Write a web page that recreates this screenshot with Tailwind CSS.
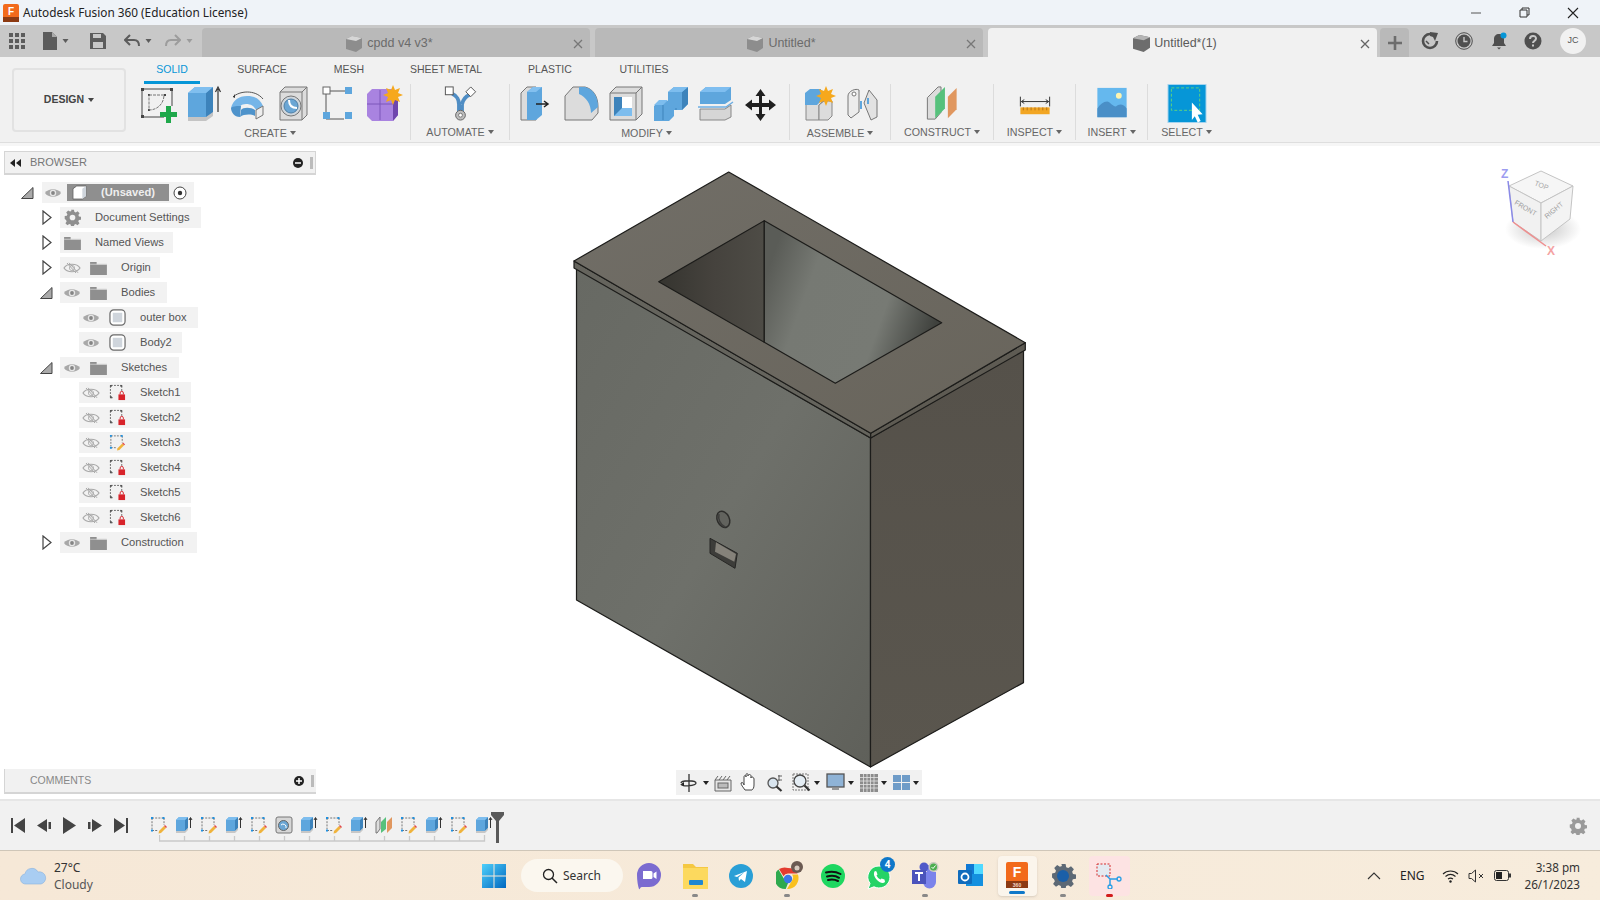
<!DOCTYPE html>
<html lang="en">
<head>
<meta charset="UTF-8">
<title>Autodesk Fusion 360 (Education License)</title>
<script src="https://cdn.jsdelivr.net/npm/@tailwindcss/browser@4"></script>
</head>
<body class="bg-white overflow-hidden">
<!-- shared icons -->
<svg class="absolute w-0 h-0">
  <defs>
    <linearGradient id="gFront" x1="0" y1="0" x2="1" y2="1"><stop offset="0" stop-color="#676963"/><stop offset=".5" stop-color="#6e706a"/><stop offset="1" stop-color="#5f605a"/></linearGradient>
    <linearGradient id="gRight" x1="0" y1="0" x2="0" y2="1"><stop offset="0" stop-color="#55514a"/><stop offset="1" stop-color="#5a564e"/></linearGradient>
    <linearGradient id="gTop" x1="0" y1="0" x2="1" y2="1"><stop offset="0" stop-color="#716e67"/><stop offset="1" stop-color="#68645b"/></linearGradient>
    <linearGradient id="gWallL" x1="0" y1="0" x2="1" y2="0"><stop offset="0" stop-color="#35342f"/><stop offset=".5" stop-color="#45423d"/><stop offset="1" stop-color="#4e4c46"/></linearGradient>
    <linearGradient id="gWallR" x1="764" y1="280" x2="930" y2="340" gradientUnits="userSpaceOnUse"><stop offset="0" stop-color="#5a5c57"/><stop offset=".25" stop-color="#767973"/><stop offset=".7" stop-color="#777a74"/><stop offset="1" stop-color="#3f413d"/></linearGradient>
    <linearGradient id="gWin" x1="0" y1="0" x2="1" y2="1"><stop offset="0" stop-color="#4fd0fb"/><stop offset="1" stop-color="#0067c0"/></linearGradient>
    <radialGradient id="gShadow"><stop offset="0" stop-color="#999" stop-opacity=".55"/><stop offset="1" stop-color="#999" stop-opacity="0"/></radialGradient>
  </defs>
  <symbol id="caret" viewBox="0 0 6 4"><path d="M0 0h6L3 4z" fill="currentColor"/></symbol>
  <symbol id="eye" viewBox="0 0 18 12"><path d="M1 6C4 1 14 1 17 6C14 11 4 11 1 6Z" fill="#a8a8a8"/><circle cx="9" cy="6" r="3.200" fill="#e6e6e6"/><circle cx="9" cy="6" r="1.900" fill="#858585"/></symbol>
  <symbol id="eyeoff" viewBox="0 0 18 12"><path d="M1 6C4 1 14 1 17 6C14 11 4 11 1 6Z" fill="none" stroke="#a8a8a8" stroke-width="1.200"/><circle cx="9" cy="6" r="2.600" fill="none" stroke="#b5b5b5"/><path d="M4 1l9 10M6 .8l9 10" stroke="#a8a8a8"/></symbol>
  <symbol id="folder" viewBox="0 0 18 15"><path d="M0 1h7v3h11v11H0z" fill="#8f8f8f"/><path d="M0 3h18v1H0z" fill="#c9c9c9"/></symbol>
  <symbol id="body" viewBox="0 0 18 18"><rect x="1" y="1" width="16" height="16" rx="4" fill="#fff" stroke="#6b6b6b" stroke-width="1.300"/><rect x="4" y="4" width="10" height="10" fill="#cfd5dc"/></symbol>
  <symbol id="sklock" viewBox="0 0 18 18"><path d="M2 1.500h11M1.500 2v12M2 14.500h3M13.500 2v6" stroke="#666" fill="none" stroke-dasharray="2 1.300"/><path d="M1 1h2v2H1zM12 1h2v2h-2zM1 13h2v2H1z" fill="#555"/><rect x="10" y="11" width="7" height="6" fill="#d8232a"/><path d="M11.800 11V9.500a1.700 1.700 0 0 1 3.400 0V11" stroke="#d8232a" fill="none"/></symbol>
  <symbol id="skedit" viewBox="0 0 18 18"><path d="M2 2h11M2 2v11M2 14.500h6M14 2v7" stroke="#777" fill="none" stroke-dasharray="2 1.200"/><path d="M1 1h2v2H1zM12.500 1h2v2h-2zM1 13.500h2v2H1z" fill="#1e90e0"/><path d="M9 15l5-5 2 2-5 5-2.500.5z" fill="#f0b33c"/><path d="M14 10l1-1 2 2-1 1z" fill="#e0454a"/></symbol>
  <symbol id="extr" viewBox="0 0 18 18"><path d="M1 4l3-3h9v11l-3 3H1z" fill="#5ea6dd"/><path d="M10 4l3-3v11l-3 3z" fill="#3d83bb"/><path d="M1 4l3-3h9l-3 3z" fill="#7dbdee"/><path d="M1 15h9l3-3v2l-3 3H1z" fill="#c7c7c7"/><path d="M15.500 12V2M14 4l1.500-2.500L17 4" stroke="#333" fill="none"/></symbol>
  <symbol id="hole" viewBox="0 0 18 18"><rect x="1" y="1" width="16" height="16" rx="2" fill="#d6d6d6" stroke="#777"/><circle cx="8.500" cy="9.500" r="5" fill="#6ba6d4" stroke="#666"/><path d="M6 9a3 3 0 0 1 5 3" fill="none" stroke="#fff"/></symbol>
  <symbol id="constr" viewBox="0 0 18 18"><path d="M1 6l4-5v12l-3 4H1z" fill="#ddd" stroke="#777"/><path d="M6 6l5-5v12l-5 4z" fill="#56c17c"/><path d="M12 6l5-5v11l-5 5z" fill="#e0975f"/></symbol>
  <symbol id="gear" viewBox="0 0 24 24"><path d="M10 1h4l.6 3 2 .8 2.600-1.700 2.800 2.800-1.700 2.600.8 2 2.900.5v4l-3 .6-.8 2 1.700 2.600-2.800 2.800-2.600-1.700-2 .8-.5 2.900h-4l-.6-3-2-.8-2.600 1.700-2.800-2.800 1.700-2.600-.8-2L1 14v-4l3-.6.8-2-1.700-2.600 2.800-2.800 2.600 1.700 2-.8zM12 8a4 4 0 1 0 0 8 4 4 0 0 0 0-8z" fill="currentColor" fill-rule="evenodd"/></symbol>
</svg>

<div class="flex flex-col w-[1600px] h-[900px] font-['Liberation_Sans',Arial,sans-serif] text-[#555]">

  <!-- title bar -->
  <div class="flex items-center h-[25px] shrink-0 bg-[#eff3f8] text-[#222]">
    <svg class="w-[16px] h-[18px] ml-[3px]" viewBox="0 0 16 18"><rect width="16" height="18" rx="2" fill="#f26a1b"/><rect y="13" width="16" height="5" fill="#8c3a12"/><text x="8" y="11" text-anchor="middle" font-size="10" font-weight="700" fill="#fff" font-family="Liberation Sans">F</text></svg>
    <span class="ml-[4px] text-[11.8px] font-['Noto_Sans',sans-serif]">Autodesk Fusion 360 (Education License)</span>
    <div class="ml-auto flex items-center">
      <svg class="w-[48px] h-[14px]" viewBox="0 0 48 14"><path d="M19 7h10" stroke="#555"/></svg>
      <svg class="w-[48px] h-[14px]" viewBox="0 0 48 14"><path d="M20 4h7v7h-7zM22 4V2h7v7h-2" stroke="#333" fill="none"/></svg>
      <svg class="w-[50px] h-[14px] mr-[2px]" viewBox="0 0 50 14"><path d="M20 2l10 10M30 2L20 12" stroke="#222" stroke-width="1.100"/></svg>
    </div>
  </div>

  <!-- tab bar -->
  <div class="flex items-end h-[32px] shrink-0 bg-[#c8c8c8]">
    <div class="flex items-center w-[202px] h-full text-[#5c5c5c]">
      <svg class="ml-[9px] w-[16px] h-[16px]" viewBox="0 0 16 16" fill="currentColor"><path d="M0 0h4v4H0zM6 0h4v4H6zM12 0h4v4h-4zM0 6h4v4H0zM6 6h4v4H6zM12 6h4v4h-4zM0 12h4v4H0zM6 12h4v4H6zM12 12h4v4h-4z"/></svg>
      <svg class="ml-[18px] w-[14px] h-[18px]" viewBox="0 0 14 18" fill="currentColor"><path d="M0 0h9l5 5v13H0z"/><path d="M9 0l5 5H9z" fill="#aaa"/></svg>
      <svg class="ml-[5px] w-[7px] h-[4px]"><use href="#caret"/></svg>
      <svg class="ml-[21px] w-[16px] h-[16px]" viewBox="0 0 16 16"><path d="M0 0h13l3 3v13H0z" fill="currentColor"/><path d="M3 1h8v4H3zM3 9h10v6H3z" fill="#c8c8c8"/></svg>
      <svg class="ml-[18px] w-[16px] h-[14px]" viewBox="0 0 16 14"><path d="M6 1L1 6l5 5M1 6h9c3 0 5 2 5 6" fill="none" stroke="currentColor" stroke-width="2"/></svg>
      <svg class="ml-[5px] w-[7px] h-[4px]"><use href="#caret"/></svg>
      <svg class="ml-[13px] w-[16px] h-[14px] text-[#9c9c9c]" viewBox="0 0 16 14"><path d="M10 1l5 5-5 5M15 6H6c-3 0-5 2-5 6" fill="none" stroke="currentColor" stroke-width="2"/></svg>
      <svg class="ml-[5px] w-[7px] h-[4px] text-[#9c9c9c]"><use href="#caret"/></svg>
    </div>
    <div class="flex items-center pt-[2px] w-[388px] h-[29px] bg-[#b9b9b9] rounded-t-[4px] text-[12.5px] text-[#6b6b6b]">
      <span class="flex-1"></span>
      <svg class="w-[16px] h-[16px] mr-[5px]" viewBox="0 0 16 16"><path d="M0 3l6-3 10 2v10l-6 4-10-3z" fill="#8d8d8d"/><path d="M0 3l10 2 6-3-10-2z" fill="#d6d6d6"/></svg>
      <span class="mr-[6px]">cpdd v4 v3*</span>
      <span class="flex-1 flex justify-end pr-[7px]"><svg class="w-[10px] h-[10px]" viewBox="0 0 10 10"><path d="M1 1l8 8M9 1l-8 8" stroke="#777" stroke-width="1.300"/></svg></span>
    </div>
    <div class="flex items-center pt-[2px] ml-[5px] w-[388px] h-[29px] bg-[#b9b9b9] rounded-t-[4px] text-[12.5px] text-[#6b6b6b]">
      <span class="flex-1"></span>
      <svg class="w-[16px] h-[16px] mr-[5px]" viewBox="0 0 16 16"><path d="M0 3l6-3 10 2v10l-6 4-10-3z" fill="#8d8d8d"/><path d="M0 3l10 2 6-3-10-2z" fill="#d6d6d6"/></svg>
      <span class="mr-[8px]">Untitled*</span>
      <span class="flex-1 flex justify-end pr-[7px]"><svg class="w-[10px] h-[10px]" viewBox="0 0 10 10"><path d="M1 1l8 8M9 1l-8 8" stroke="#777" stroke-width="1.300"/></svg></span>
    </div>
    <div class="flex items-center pt-[2px] ml-[5px] w-[389px] h-[29px] bg-[#f1f1f1] rounded-t-[4px] text-[12.5px] text-[#5a5a5a]">
      <span class="flex-1"></span>
      <svg class="w-[17px] h-[17px] mr-[4px]" viewBox="0 0 16 16"><path d="M0 3l6-3 10 2v10l-6 4-10-3z" fill="#6d6d6d"/><path d="M0 3l10 2 6-3-10-2z" fill="#b5b5b5"/></svg>
      <span class="mr-[8px]">Untitled*(1)</span>
      <span class="flex-1 flex justify-end pr-[7px]"><svg class="w-[10px] h-[10px]" viewBox="0 0 10 10"><path d="M1 1l8 8M9 1l-8 8" stroke="#666" stroke-width="1.300"/></svg></span>
    </div>
    <div class="flex items-center justify-center ml-[3px] w-[29px] h-[29px] bg-[#b9b9b9] rounded-t-[4px]">
      <svg class="w-[14px] h-[14px]" viewBox="0 0 14 14"><path d="M7 0v14M0 7h14" stroke="#6d6d6d" stroke-width="2.600"/></svg>
    </div>
    <div class="flex items-center h-full text-[#4f4f4f]">
      <svg class="ml-[12px] w-[18px] h-[18px]" viewBox="0 0 18 18"><path d="M9 2a7 7 0 1 0 7 7" fill="none" stroke="currentColor" stroke-width="2.600"/><path d="M9 0l8 1-3 8-2-4-3-1z" fill="currentColor"/><path d="M5 9l3 3" stroke="currentColor" stroke-width="1.500"/></svg>
      <svg class="ml-[16px] w-[18px] h-[18px]" viewBox="0 0 18 18"><circle cx="9" cy="9" r="8.300" fill="none" stroke="currentColor"/><circle cx="9" cy="9" r="6.500" fill="currentColor"/><path d="M9 5v4.500h3.500" fill="none" stroke="#c8c8c8" stroke-width="1.400"/></svg>
      <svg class="ml-[17px] w-[18px] h-[18px]" viewBox="0 0 18 18"><path d="M9 2c3 0 5 2 5 5v4l2 3H2l2-3V7c0-3 2-5 5-5z" fill="currentColor"/><path d="M7 15.500h4l-2 2z" fill="currentColor"/><circle cx="13.500" cy="3.500" r="3" fill="#0696d7"/></svg>
      <svg class="ml-[16px] w-[18px] h-[18px]" viewBox="0 0 18 18"><circle cx="9" cy="9" r="8.500" fill="currentColor"/><path d="M6 7c0-4 6-4 6-.5 0 2.500-3 2.500-3 4.500" fill="none" stroke="#c8c8c8" stroke-width="2"/><path d="M8 12.500h2v2H8z" fill="#c8c8c8"/></svg>
      <span class="flex items-center justify-center ml-[18px] w-[26px] h-[26px] rounded-full bg-[#f1f1f1] text-[9px] text-[#555]">JC</span>
    </div>
  </div>

  <!-- toolbar -->
  <div class="flex h-[86px] shrink-0 bg-[#f1f1f1] border-b-[1px] border-[#dedede] shadow-[0_3px_0_#f6f6f6] z-10 relative">
    <button class="flex items-center justify-center ml-[12px] mt-[11px] w-[114px] h-[64px] border-2 border-[#e2e2e2] rounded-[4px] text-[10.5px] font-bold text-[#444]">DESIGN<svg class="ml-[4px] w-[6px] h-[4px]"><use href="#caret"/></svg></button>
    <div class="flex flex-col ml-[10px]">
      <div class="flex h-[27px] text-[10.5px] text-[#555] text-center">
        <span class="ml-[8px] w-[56px] pt-[5px] border-b-[3px] border-[#0696d7] text-[#0696d7]">SOLID</span>
        <span class="w-[124px] pt-[5px]">SURFACE</span>
        <span class="w-[50px] pt-[5px]">MESH</span>
        <span class="w-[144px] pt-[5px]">SHEET METAL</span>
        <span class="w-[64px] pt-[5px]">PLASTIC</span>
        <span class="w-[124px] pt-[5px]">UTILITIES</span>
      </div>
      <div class="flex text-[10.7px] text-[#666]">
        <!-- create -->
        <div class="flex flex-col items-center w-[274px] h-[56px]">
          <div class="flex h-[40px] -ml-[6px]">
            <svg class="w-[45px] h-[40px]" viewBox="0 0 45 40"><path d="M7 5h30M7 5v28M7 33h22M37 5v17" stroke="#444" fill="none" stroke-width="1"/><path d="M6 4h3v3H6zM35 4h3v3h-3zM6 31h3v3H6zM13 10h2v2h-2zM29 10h2v2h-2zM13 25h2v2h-2z" fill="#444"/><path d="M14 11h15c0 8-6 15-15 15z" fill="none" stroke="#777" stroke-dasharray="3 1"/><path d="M31 22h5v6h6v5h-6v6h-5v-6h-6v-5h6z" fill="#1fa84b"/></svg>
            <svg class="w-[45px] h-[40px]" viewBox="0 0 45 40"><path d="M8 9l7-6h18v26l-7 6H8z" fill="#5ea6dd"/><path d="M26 9l7-6v26l-7 6z" fill="#3d83bb"/><path d="M8 9l7-6h18l-7 6z" fill="#80bfef"/><path d="M8 33h18l7-5v4l-7 5H8z" fill="#c4c4c4"/><path d="M38 28V5M35.500 8L38 3l2.500 5" stroke="#333" fill="none" stroke-width="1.200"/></svg>
            <svg class="w-[45px] h-[40px]" viewBox="0 0 45 40"><path d="M6 24c2-8 8-12 16-12s13 3 16 10l-7 4c-2-4-5-6-10-6s-7 3-8 6z" fill="#75b5e8"/><path d="M6 24c0 4 3 9 9 9 0-4 1-9 1-11-3 0-8 0-10 2z" fill="#4e93cb"/><path d="M15 33l1-7c2-3 10-3 14 0v6c-4-2-11-2-15 1z" fill="#4e93cb"/><path d="M31 26l7-4v9l-7 4z" fill="#eee" stroke="#777"/><path d="M8 13c6-6 22-8 30 2" fill="none" stroke="#555"/><path d="M8 13l2-3v4z" fill="#333"/></svg>
            <svg class="w-[45px] h-[40px]" viewBox="0 0 45 40"><path d="M10 8l5-5h22v28l-5 5H10z" fill="#dcdcdc" stroke="#777"/><path d="M10 8h22v28M32 8l5-5" fill="none" stroke="#777"/><circle cx="21" cy="22" r="10" fill="#cfd6dc" stroke="#777"/><circle cx="21" cy="22" r="7" fill="#6ba6d4" stroke="#4e7fa6"/><path d="M19 16c0 5 3 8 8 8" fill="none" stroke="#fff" stroke-width="2"/></svg>
            <svg class="w-[45px] h-[40px]" viewBox="0 0 45 40"><path d="M11 7h24M11 10v19" stroke="#555"/><path d="M11 35h18" stroke="#555"/><rect x="8" y="3" width="7" height="7" fill="#fff" stroke="#666"/><rect x="30" y="3" width="7" height="7" fill="#5ea6dd"/><rect x="8" y="28" width="7" height="7" fill="#5ea6dd"/><rect x="30" y="28" width="7" height="7" fill="#5ea6dd"/></svg>
            <svg class="w-[45px] h-[40px]" viewBox="0 0 45 40"><path d="M7 10l5-5h20l6 6v20l-5 6H12l-5-5z" fill="#a983e0"/><path d="M7 20h30M20 6v30" stroke="#7c57ba" stroke-width="1"/><path d="M33 12l5 5v14l-5 6z" fill="#6f46ad"/><path d="M33 1l2 5 5-2-2 5 5 2-5 2 2 5-5-2-2 5-2-5-5 2 2-5-5-2 5-2-2-5 5 2z" fill="#f6a81c"/></svg>
          </div>
          <span class="flex items-center h-[16px] mt-[1px] -ml-[6px]">CREATE<svg class="ml-[3px] w-[6px] h-[4px]"><use href="#caret"/></svg></span>
        </div>
        <!-- automate -->
        <div class="flex flex-col items-center w-[99px] h-[56px] border-l border-[#dcdcdc]">
          <svg class="w-[40px] h-[40px]" viewBox="0 0 40 40"><path d="M12 10c5 2 7 7 7 11M30 11c-5 2-7 5-8 10M19 21v9h3v-9" fill="none" stroke="#4f8dc4" stroke-width="4"/><rect x="5" y="3" width="8" height="8" fill="#fff" stroke="#555"/><path d="M31 3l5 5-5 5-5-5z" fill="#fff" stroke="#555"/><circle cx="20.500" cy="32" r="5" fill="#bdbdbd" stroke="#666"/><circle cx="20.500" cy="32" r="2" fill="#fff" stroke="#777"/></svg>
          <span class="flex items-center h-[16px] mt-[1px]">AUTOMATE<svg class="ml-[3px] w-[6px] h-[4px]"><use href="#caret"/></svg></span>
        </div>
        <!-- modify -->
        <div class="flex flex-col items-center w-[280px] h-[56px] border-l border-[#dcdcdc]">
          <div class="flex h-[40px] -ml-[4px]">
            <svg class="w-[45px] h-[40px]" viewBox="0 0 45 40"><path d="M8 36V9l6-6h9v33z" fill="#dcdcdc" stroke="#777"/><path d="M14 36V8l6-5h9v28l-6 5z" fill="#5ea6dd"/><path d="M14 8l6-5h9l-6 5z" fill="#83c0ef"/><path d="M23 20h11M31 17l4 3-4 3" stroke="#222" fill="none" stroke-width="1.500"/></svg>
            <svg class="w-[45px] h-[40px]" viewBox="0 0 45 40"><path d="M7 36V12l8-9h12c8 2 13 9 13 20v6l-6 7z" fill="#dcdcdc" stroke="#777"/><path d="M21 3h6c8 2 13 9 13 20l-7 6c0-9-5-16-12-19z" fill="#5ea6dd"/></svg>
            <svg class="w-[45px] h-[40px]" viewBox="0 0 45 40"><path d="M7 9l6-6h26v27l-6 6H7z" fill="#dcdcdc" stroke="#777"/><path d="M7 9h26v27M33 9l6-6" fill="none" stroke="#777"/><rect x="11" y="13" width="18" height="19" fill="#fff"/><path d="M11 13h8v11h10v8H11z" fill="#3d83bb"/><path d="M19 24h10v8H11z" fill="#7dbdee"/></svg>
            <svg class="w-[45px] h-[40px]" viewBox="0 0 45 40"><path d="M6 22l5-5h9V8l6-5h14v17l-6 6h-8v6l-5 5H6z" fill="#5ea6dd"/><path d="M34 8l6-5v17l-6 6z" fill="#3d83bb"/><path d="M20 8l6-5h14l-6 5zM6 21l5-5h9l-5 5z" fill="#7dbdee"/><path d="M15 21v15M28 26v-2" stroke="#3d83bb"/></svg>
            <svg class="w-[45px] h-[40px]" viewBox="0 0 45 40"><path d="M7 8l6-5h25v13l-6 4H7z" fill="#5ea6dd"/><path d="M7 8h25l6-5H13z" fill="#7fbef0"/><path d="M5 23h28l7-5" stroke="#6eaee3" fill="none" stroke-width="1.500"/><path d="M7 25h25l6-4v12l-6 3H7z" fill="#d6d6d6" stroke="#888"/></svg>
            <svg class="w-[45px] h-[40px]" viewBox="0 0 45 40"><path d="M22.500 5l5 7h-3.500v7h7v-3.500l7 5.500-7 5.500v-3.500h-7v7h3.500l-5 7-5-7h3.500v-7h-7v3.500l-7-5.500 7-5.500v3.500h7v-7h-3.500z" fill="#1f1f1f"/></svg>
          </div>
          <span class="flex items-center h-[16px] mt-[1px] -ml-[6px]">MODIFY<svg class="ml-[3px] w-[6px] h-[4px]"><use href="#caret"/></svg></span>
        </div>
        <!-- assemble -->
        <div class="flex flex-col items-center w-[101px] h-[56px] border-l border-[#dcdcdc]">
          <div class="flex h-[40px]">
            <svg class="w-[46px] h-[40px]" viewBox="0 0 46 40"><path d="M12 21l4-4h13l-4 4v15H12z" fill="#dcdcdc" stroke="#888"/><path d="M25 21l5-4h8v15l-4 4h-9z" fill="#dcdcdc" stroke="#888"/><path d="M11 9l5-4h11v12l-4 4H11z" fill="#5ea6dd"/><path d="M32 2l2 5 5-2-2 5 5 2-5 2 2 5-5-2-2 5-2-5-5 2 2-5-5-2 5-2-2-5 5 2z" fill="#f6a81c"/></svg>
            <svg class="w-[46px] h-[40px]" viewBox="0 0 46 40"><path d="M8 31V12c0-5 8-8 11-6v22l-8 6z" fill="#ececec" stroke="#777"/><circle cx="14" cy="10" r="2" fill="#fff" stroke="#777"/><path d="M24 19l5-13 8 10v17l-6 3z" fill="#e2e2e2" stroke="#777"/><path d="M21 17v8M28 14v6" stroke="#5ea6dd" stroke-width="2"/></svg>
          </div>
          <span class="flex items-center h-[16px] mt-[1px]">ASSEMBLE<svg class="ml-[3px] w-[6px] h-[4px]"><use href="#caret"/></svg></span>
        </div>
        <!-- construct -->
        <div class="flex flex-col items-center w-[103px] h-[56px] border-l border-[#dcdcdc]">
          <svg class="w-[40px] h-[40px]" viewBox="0 0 40 40"><path d="M5 36V14l11-11h3v26l-6 7z" fill="#dcdcdc" stroke="#777"/><path d="M13 35V13l10-10v22z" fill="#56c17c"/><path d="M26 35V13l9-9v22z" fill="#e0975f"/></svg>
          <span class="flex items-center h-[16px] mt-[1px]">CONSTRUCT<svg class="ml-[3px] w-[6px] h-[4px]"><use href="#caret"/></svg></span>
        </div>
        <!-- inspect -->
        <div class="flex flex-col items-center w-[82px] h-[56px] border-l border-[#dcdcdc]">
          <svg class="w-[40px] h-[40px]" viewBox="0 0 40 40"><path d="M5 13v10M35 13v10M6 18h28M9 16l-3 2 3 2M31 16l3 2-3 2" stroke="#333" fill="none"/><rect x="5" y="24" width="30" height="7" fill="#f2a623"/><path d="M8 24v3M12 24v3M16 24v3M20 24v3M24 24v3M28 24v3M32 24v3" stroke="#b6741a"/></svg>
          <span class="flex items-center h-[16px] mt-[1px]">INSPECT<svg class="ml-[3px] w-[6px] h-[4px]"><use href="#caret"/></svg></span>
        </div>
        <!-- insert -->
        <div class="flex flex-col items-center w-[72px] h-[56px] border-l border-[#dcdcdc]">
          <svg class="w-[40px] h-[40px]" viewBox="0 0 40 40"><rect x="5" y="4" width="30" height="30" fill="#65b8ee"/><path d="M5 34V25c3-4 6-7 10-7 3 0 5 5 9 5 3-3 8-3 11 2v9z" fill="#4a8fc7"/><circle cx="27" cy="12" r="3" fill="#fdf4b0"/></svg>
          <span class="flex items-center h-[16px] mt-[1px]">INSERT<svg class="ml-[3px] w-[6px] h-[4px]"><use href="#caret"/></svg></span>
        </div>
        <!-- select -->
        <div class="flex flex-col items-center w-[78px] h-[56px] border-l border-[#dcdcdc]">
          <svg class="w-[40px] h-[40px]" viewBox="0 0 40 40"><rect x=".5" y=".5" width="39" height="39" fill="#0696d7" stroke="#a6d3ee"/><rect x="4" y="4" width="29" height="23" fill="none" stroke="#5fd37f" stroke-dasharray="3 2"/><path d="M25 19l11 12-5 .5 3 6.500-3 1.500-3-6.500-3 4z" fill="#fff"/></svg>
          <span class="flex items-center h-[16px] mt-[1px]">SELECT<svg class="ml-[3px] w-[6px] h-[4px]"><use href="#caret"/></svg></span>
        </div>
      </div>
    </div>
  </div>

  <!-- canvas -->
  <div class="relative flex-1 bg-white">
    <svg class="absolute inset-0 w-full h-full" viewBox="0 143 1600 656">
      <g stroke="#1c1c1a" stroke-width="1.200" stroke-linejoin="round">
        <path d="M576.500 268V600L870.500 767V438z" fill="url(#gFront)"/>
        <path d="M870.500 438V767L1023.500 682.600V350z" fill="url(#gRight)"/>
        <path d="M574 261V268L870.700 438V433.300z" fill="#65645d"/>
        <path d="M870.700 433.300V438L1025.300 350V342.700z" fill="#5e5b53"/>
        <path d="M574 261L728.700 172L1025.300 342.700L870.700 433.300z" fill="url(#gTop)"/>
        <path d="M658.700 281.700L764.300 220.700V342.300z" fill="url(#gWallL)"/>
        <path d="M764.300 220.700L941.700 322.700L835.300 383.300L764.300 342.300z" fill="url(#gWallR)"/>
      </g>
      <ellipse cx="723.300" cy="519.300" rx="6" ry="8.500" transform="rotate(-25 723.300 519.300)" fill="#62635e" stroke="#2e2e2c" stroke-width="1.500"/>
      <path d="M719 514c-1 5 1 10 6 13" fill="none" stroke="#3c3c3a" stroke-width="1.500"/>
      <path d="M710 538.300L737.300 553.300L735 568.300L710 553.300z" fill="#3d3d3a" stroke="#262624"/>
      <path d="M716 542.300L736 554L734.300 561.700L715 551.700z" fill="#85827a"/>
    </svg>

    <!-- browser panel -->
    <div class="absolute left-[4px] top-[8px] w-[312px] text-[11.2px] text-[#555]">
      <div class="flex items-center h-[24px] bg-[#f1f1f1] border border-[#d5d5d5] border-b-2 pl-[5px] pr-[2px]">
        <svg class="w-[11px] h-[8px] text-[#222]" viewBox="0 0 11 8" fill="currentColor"><path d="M5 0v8L0 4zM11 0v8L6 4z"/></svg>
        <span class="ml-[9px] text-[11px] text-[#777]">BROWSER</span>
        <svg class="ml-auto w-[10px] h-[10px]" viewBox="0 0 10 10"><circle cx="5" cy="5" r="5" fill="#222"/><path d="M2 5h6" stroke="#fff" stroke-width="1.500"/></svg>
        <span class="ml-[7px] w-[3px] h-[12px] bg-[#bbb]"></span>
      </div>
      <div class="flex flex-col gap-[4px] mt-[7px] -ml-[4px]">
        <div class="flex items-center h-[21px]">
          <svg class="ml-[21px] w-[13px] h-[12px]" viewBox="0 0 13 12"><path d="M12 .5V11.500H.5z" fill="#aaa" stroke="#444"/></svg>
          <div class="flex items-center h-[21px] ml-[8px] pr-[7px] bg-[#f2f2f2]">
            <svg class="w-[18px] h-[12px] ml-[2px]"><use href="#eye"/></svg>
            <div class="flex items-center ml-[5px] w-[102px] h-[17px] bg-[#8f8f8f]">
              <svg class="ml-[5px] w-[15px] h-[15px]" viewBox="0 0 16 16"><path d="M1 4l4-3h10v11l-4 3H1z" fill="#fff" stroke="#666"/><path d="M11 4l4-3v11l-4 3z" fill="#cfd5dc"/></svg>
              <span class="ml-[14px] font-bold text-[#eee]">(Unsaved)</span>
            </div>
            <svg class="ml-[4px] w-[14px] h-[14px]" viewBox="0 0 14 14"><circle cx="7" cy="7" r="6" fill="#fff" stroke="#444"/><circle cx="7" cy="7" r="2.200" fill="#333"/></svg>
          </div>
        </div>
        <div class="flex items-center h-[21px]">
          <svg class="ml-[42px] w-[10px] h-[15px]" viewBox="0 0 10 15"><path d="M1 1l8 6.500L1 14z" fill="#fff" stroke="#444" stroke-width="1.200"/></svg>
          <div class="flex items-center h-[21px] ml-[8px] pr-[11px] bg-[#f2f2f2]">
            <span class="flex justify-center w-[24px] text-[#8f8f8f]"><svg class="w-[17px] h-[17px]"><use href="#gear"/></svg></span>
            <span class="ml-[11px]">Document Settings</span>
          </div>
        </div>
        <div class="flex items-center h-[21px]">
          <svg class="ml-[42px] w-[10px] h-[15px]" viewBox="0 0 10 15"><path d="M1 1l8 6.500L1 14z" fill="#fff" stroke="#444" stroke-width="1.200"/></svg>
          <div class="flex items-center h-[21px] ml-[8px] pr-[9px] bg-[#f2f2f2]">
            <span class="flex justify-center w-[24px]"><svg class="w-[17px] h-[14px]"><use href="#folder"/></svg></span>
            <span class="ml-[11px]">Named Views</span>
          </div>
        </div>
        <div class="flex items-center h-[21px]">
          <svg class="ml-[42px] w-[10px] h-[15px]" viewBox="0 0 10 15"><path d="M1 1l8 6.500L1 14z" fill="#fff" stroke="#444" stroke-width="1.200"/></svg>
          <div class="flex items-center h-[21px] ml-[8px] pr-[9px] bg-[#f2f2f2]">
            <span class="flex justify-center w-[24px]"><svg class="w-[18px] h-[12px]"><use href="#eyeoff"/></svg></span>
            <span class="flex justify-center w-[28px]"><svg class="w-[17px] h-[14px]"><use href="#folder"/></svg></span>
            <span class="ml-[9px]">Origin</span>
          </div>
        </div>
        <div class="flex items-center h-[21px]">
          <svg class="ml-[40px] w-[13px] h-[12px]" viewBox="0 0 13 12"><path d="M12 .5V11.500H.5z" fill="#aaa" stroke="#444"/></svg>
          <div class="flex items-center h-[21px] ml-[7px] pr-[12px] bg-[#f2f2f2]">
            <span class="flex justify-center w-[24px]"><svg class="w-[18px] h-[12px]"><use href="#eye"/></svg></span>
            <span class="flex justify-center w-[28px]"><svg class="w-[17px] h-[14px]"><use href="#folder"/></svg></span>
            <span class="ml-[9px]">Bodies</span>
          </div>
        </div>
        <div class="flex items-center h-[21px] ml-[79px] w-fit pr-[11px] bg-[#f2f2f2]">
          <span class="flex justify-center w-[24px]"><svg class="w-[18px] h-[12px]"><use href="#eye"/></svg></span>
          <span class="flex justify-center w-[28px]"><svg class="w-[17px] h-[17px]"><use href="#body"/></svg></span>
          <span class="ml-[9px]">outer box</span>
        </div>
        <div class="flex items-center h-[21px] ml-[79px] w-fit pr-[10px] bg-[#f2f2f2]">
          <span class="flex justify-center w-[24px]"><svg class="w-[18px] h-[12px]"><use href="#eye"/></svg></span>
          <span class="flex justify-center w-[28px]"><svg class="w-[17px] h-[17px]"><use href="#body"/></svg></span>
          <span class="ml-[9px]">Body2</span>
        </div>
        <div class="flex items-center h-[21px]">
          <svg class="ml-[40px] w-[13px] h-[12px]" viewBox="0 0 13 12"><path d="M12 .5V11.500H.5z" fill="#aaa" stroke="#444"/></svg>
          <div class="flex items-center h-[21px] ml-[7px] pr-[12px] bg-[#f2f2f2]">
            <span class="flex justify-center w-[24px]"><svg class="w-[18px] h-[12px]"><use href="#eye"/></svg></span>
            <span class="flex justify-center w-[28px]"><svg class="w-[17px] h-[14px]"><use href="#folder"/></svg></span>
            <span class="ml-[9px]">Sketches</span>
          </div>
        </div>
        <div class="flex items-center h-[21px] ml-[79px] w-fit pr-[11px] bg-[#f2f2f2]">
          <span class="flex justify-center w-[24px]"><svg class="w-[18px] h-[12px]"><use href="#eyeoff"/></svg></span>
          <span class="flex justify-center w-[28px]"><svg class="w-[17px] h-[17px]"><use href="#sklock"/></svg></span>
          <span class="ml-[9px]">Sketch1</span>
        </div>
        <div class="flex items-center h-[21px] ml-[79px] w-fit pr-[11px] bg-[#f2f2f2]">
          <span class="flex justify-center w-[24px]"><svg class="w-[18px] h-[12px]"><use href="#eyeoff"/></svg></span>
          <span class="flex justify-center w-[28px]"><svg class="w-[17px] h-[17px]"><use href="#sklock"/></svg></span>
          <span class="ml-[9px]">Sketch2</span>
        </div>
        <div class="flex items-center h-[21px] ml-[79px] w-fit pr-[11px] bg-[#f2f2f2]">
          <span class="flex justify-center w-[24px]"><svg class="w-[18px] h-[12px]"><use href="#eyeoff"/></svg></span>
          <span class="flex justify-center w-[28px]"><svg class="w-[17px] h-[17px]"><use href="#skedit"/></svg></span>
          <span class="ml-[9px]">Sketch3</span>
        </div>
        <div class="flex items-center h-[21px] ml-[79px] w-fit pr-[11px] bg-[#f2f2f2]">
          <span class="flex justify-center w-[24px]"><svg class="w-[18px] h-[12px]"><use href="#eyeoff"/></svg></span>
          <span class="flex justify-center w-[28px]"><svg class="w-[17px] h-[17px]"><use href="#sklock"/></svg></span>
          <span class="ml-[9px]">Sketch4</span>
        </div>
        <div class="flex items-center h-[21px] ml-[79px] w-fit pr-[11px] bg-[#f2f2f2]">
          <span class="flex justify-center w-[24px]"><svg class="w-[18px] h-[12px]"><use href="#eyeoff"/></svg></span>
          <span class="flex justify-center w-[28px]"><svg class="w-[17px] h-[17px]"><use href="#sklock"/></svg></span>
          <span class="ml-[9px]">Sketch5</span>
        </div>
        <div class="flex items-center h-[21px] ml-[79px] w-fit pr-[11px] bg-[#f2f2f2]">
          <span class="flex justify-center w-[24px]"><svg class="w-[18px] h-[12px]"><use href="#eyeoff"/></svg></span>
          <span class="flex justify-center w-[28px]"><svg class="w-[17px] h-[17px]"><use href="#sklock"/></svg></span>
          <span class="ml-[9px]">Sketch6</span>
        </div>
        <div class="flex items-center h-[21px]">
          <svg class="ml-[42px] w-[10px] h-[15px]" viewBox="0 0 10 15"><path d="M1 1l8 6.500L1 14z" fill="#fff" stroke="#444" stroke-width="1.200"/></svg>
          <div class="flex items-center h-[21px] ml-[8px] pr-[13px] bg-[#f2f2f2]">
            <span class="flex justify-center w-[24px]"><svg class="w-[18px] h-[12px]"><use href="#eye"/></svg></span>
            <span class="flex justify-center w-[28px]"><svg class="w-[17px] h-[14px]"><use href="#folder"/></svg></span>
            <span class="ml-[9px]">Construction</span>
          </div>
        </div>
      </div>
    </div>

    <!-- comments panel -->
    <div class="absolute left-[4px] top-[626px] flex items-center w-[312px] h-[25px] bg-[#f1f1f1] border-l border-b-2 border-[#d5d5d5] pl-[25px] pr-[2px] text-[10.5px] text-[#888]">
      <span>COMMENTS</span>
      <svg class="ml-auto w-[10px] h-[10px]" viewBox="0 0 10 10"><circle cx="5" cy="5" r="5" fill="#222"/><path d="M2 5h6M5 2v6" stroke="#fff" stroke-width="1.500"/></svg>
      <span class="ml-[7px] w-[3px] h-[12px] bg-[#bbb]"></span>
    </div>

    <!-- navigation bar -->
    <div class="absolute left-[676px] top-[627px] flex items-center w-[246px] h-[25px] bg-[#f1f1f1] px-[3px] text-[#222]">
      <svg class="w-[20px] h-[20px]" viewBox="0 0 20 20"><path d="M10 1v18M2 10c0-3 15-3 15 0s-15 4-15 1" fill="none" stroke="#333" stroke-width="1.300"/><path d="M2 11l3-2v4z" fill="#222"/></svg>
      <svg class="ml-[4px] w-[6px] h-[4px]"><use href="#caret"/></svg>
      <svg class="ml-[5px] w-[18px] h-[18px]" viewBox="0 0 18 18"><path d="M1 6h16v11H1z" fill="#e6e6e6" stroke="#666"/><rect x="4" y="9" width="10" height="5" fill="#bbb" stroke="#666"/><path d="M1 6l3-4M5 6l3-4M9 6l3-4M13 6l3-4" stroke="#666"/></svg>
      <svg class="ml-[8px] w-[18px] h-[19px]" viewBox="0 0 18 19"><path d="M5 17c-2-3-4-5-4-7 1-1 3 0 3 2V4c0-2 2-2 2 0V2c0-2 2-2 2 0v1c0-2 3-2 3 0v2c0-2 3-1 3 1v6c0 3-1 4-2 5z" fill="#fff" stroke="#444"/></svg>
      <svg class="ml-[8px] w-[18px] h-[18px]" viewBox="0 0 18 18"><circle cx="7" cy="9" r="5" fill="#d8e4ee" stroke="#555" stroke-width="1.300"/><path d="M10.500 12.500l5 4.500" stroke="#333" stroke-width="2.200"/><path d="M13 1v6M12 2h4M12 6h4" stroke="#555" stroke-width=".9"/></svg>
      <svg class="ml-[8px] w-[19px] h-[19px]" viewBox="0 0 19 19"><rect x="1" y="1" width="15" height="16" fill="none" stroke="#777" stroke-dasharray="2 1"/><circle cx="8" cy="8" r="6" fill="#e4edf4" stroke="#444" stroke-width="1.300"/><path d="M12.500 12.500l5 5" stroke="#333" stroke-width="2.200"/></svg>
      <svg class="ml-[3px] w-[6px] h-[4px]"><use href="#caret"/></svg>
      <svg class="ml-[6px] w-[19px] h-[19px]" viewBox="0 0 19 19"><rect x="1" y="1" width="17" height="13" fill="#8fb3d6" stroke="#555" stroke-width="1.300"/><path d="M6 15h7v2H6z" fill="#999"/></svg>
      <svg class="ml-[3px] w-[6px] h-[4px]"><use href="#caret"/></svg>
      <svg class="ml-[6px] w-[18px] h-[18px]" viewBox="0 0 18 18"><rect width="18" height="18" fill="#8c8c8c"/><path d="M3.500 0v18M7 0v18M10.500 0v18M14 0v18M0 3.500h18M0 7h18M0 10.500h18M0 14h18" stroke="#e3e3e3" stroke-width=".8"/></svg>
      <svg class="ml-[3px] w-[6px] h-[4px]"><use href="#caret"/></svg>
      <svg class="ml-[6px] w-[17px] h-[15px]" viewBox="0 0 17 15"><path d="M0 0h8v7H0zM9 0h8v7H9zM0 8h8v7H0zM9 8h8v7H9z" fill="#6f9cc8"/></svg>
      <svg class="ml-[3px] w-[6px] h-[4px]"><use href="#caret"/></svg>
    </div>

    <!-- view cube -->
    <svg class="absolute left-[1495px] top-[14px] w-[95px] h-[105px]" viewBox="1495 158 95 105">
      <ellipse cx="1543" cy="230" rx="38" ry="20" fill="url(#gShadow)"/>
      <path d="M1509 187L1541 172L1573 187L1541 204z" fill="#f6f6f6" stroke="#c4c4c4"/>
      <path d="M1509 187L1541 204V242L1513 223z" fill="#f1f1f1" stroke="#c4c4c4"/>
      <path d="M1541 204L1573 187L1570 220L1541 242z" fill="#f3f3f3" stroke="#c4c4c4"/>
      <text transform="translate(1534 186) rotate(22)" font-size="7" fill="#a8a8a8" font-family="Liberation Sans">TOP</text>
      <text transform="translate(1514 205) rotate(30)" font-size="7" fill="#a0a0a0" font-family="Liberation Sans">FRONT</text>
      <text transform="translate(1547 220) rotate(-40)" font-size="7" fill="#a0a0a0" font-family="Liberation Sans">RIGHT</text>
      <path d="M1508 182L1513 223" stroke="#8a8ae8" stroke-width="1.500"/>
      <path d="M1513 223L1546 247" stroke="#ee8f8f" stroke-width="1.500"/>
      <text x="1501" y="179" font-size="12" font-weight="700" fill="#9c9cf0" font-family="Liberation Sans">Z</text>
      <text x="1547" y="256" font-size="12" font-weight="700" fill="#f4a3a3" font-family="Liberation Sans">X</text>
    </svg>
  </div>

  <!-- timeline -->
  <div class="flex items-center h-[51px] shrink-0 bg-[#f1f1f1] border-t-2 border-[#e6e6e6] text-[#444]">
    <svg class="ml-[11px] w-[14px] h-[15px]" viewBox="0 0 14 15" fill="currentColor"><path d="M0 0h2v15H0zM14 0v15L3 7.500z"/></svg>
    <svg class="ml-[12px] w-[14px] h-[13px]" viewBox="0 0 14 13" fill="currentColor"><path d="M10 0v13L0 6.500zM11.500 3H14v7h-2.500z"/></svg>
    <svg class="ml-[12px] w-[13px] h-[17px]" viewBox="0 0 13 17" fill="currentColor"><path d="M0 0l13 8.500L0 17z"/></svg>
    <svg class="ml-[12px] w-[14px] h-[13px]" viewBox="0 0 14 13" fill="currentColor"><path d="M4 0v13l10-6.500zM0 3h2.500v7H0z"/></svg>
    <svg class="ml-[12px] w-[14px] h-[15px]" viewBox="0 0 14 15" fill="currentColor"><path d="M12 0h2v15h-2zM0 0v15l11-7.500z"/></svg>
    <div class="relative flex flex-col ml-[22px] w-[360px] mt-[6px]">
      <div class="flex h-[20px]">
        <span class="w-[25px]"><svg class="w-[18px] h-[18px]"><use href="#skedit"/></svg></span>
        <span class="w-[25px]"><svg class="w-[18px] h-[18px]"><use href="#extr"/></svg></span>
        <span class="w-[25px]"><svg class="w-[18px] h-[18px]"><use href="#skedit"/></svg></span>
        <span class="w-[25px]"><svg class="w-[18px] h-[18px]"><use href="#extr"/></svg></span>
        <span class="w-[25px]"><svg class="w-[18px] h-[18px]"><use href="#skedit"/></svg></span>
        <span class="w-[25px]"><svg class="w-[18px] h-[18px]"><use href="#hole"/></svg></span>
        <span class="w-[25px]"><svg class="w-[18px] h-[18px]"><use href="#extr"/></svg></span>
        <span class="w-[25px]"><svg class="w-[18px] h-[18px]"><use href="#skedit"/></svg></span>
        <span class="w-[25px]"><svg class="w-[18px] h-[18px]"><use href="#extr"/></svg></span>
        <span class="w-[25px]"><svg class="w-[18px] h-[18px]"><use href="#constr"/></svg></span>
        <span class="w-[25px]"><svg class="w-[18px] h-[18px]"><use href="#skedit"/></svg></span>
        <span class="w-[25px]"><svg class="w-[18px] h-[18px]"><use href="#extr"/></svg></span>
        <span class="w-[25px]"><svg class="w-[18px] h-[18px]"><use href="#skedit"/></svg></span>
        <span class="w-[25px]"><svg class="w-[18px] h-[18px]"><use href="#extr"/></svg></span>
      </div>
      <svg class="w-[330px] h-[8px] ml-[9px] -mt-[2px]" viewBox="0 0 330 8"><path d="M.5 1v6h325V1M25.500 2v5M50.500 2v5M75.500 2v5M100.500 2v5M125.500 2v5M150.500 2v5M175.500 2v5M200.500 2v5M225.500 2v5M250.500 2v5M275.500 2v5M300.500 2v5" fill="none" stroke="#c9c9c9" stroke-width="1.300"/></svg>
      <svg class="absolute left-[341px] -top-[4px] w-[13px] h-[31px]" viewBox="0 0 13 31"><path d="M0 0h13v3L8 9v22H5V9L0 3z" fill="#5a5a5a"/></svg>
    </div>
    <span class="ml-auto mr-[13px] text-[#9a9a9a]"><svg class="w-[18px] h-[18px]"><use href="#gear"/></svg></span>
  </div>

  <!-- taskbar -->
  <div class="flex items-center h-[50px] shrink-0 bg-gradient-to-r from-[#f6e8d7] to-[#f7ecdc] border-t border-[#cfc6b8] text-[#333] font-['Noto_Sans',sans-serif]">
    <svg class="ml-[20px] w-[27px] h-[18px]" viewBox="0 0 27 18"><path d="M6 17a5 5 0 0 1-1-10 7 7 0 0 1 13-2 5.500 5.500 0 0 1 3 12z" fill="#a9cdf2" stroke="#8ab2de" stroke-width=".6"/></svg>
    <div class="ml-[7px] w-[70px] text-[12px] leading-[17px]">
      <div>27°C</div>
      <div class="text-[#555]">Cloudy</div>
    </div>
    <svg class="ml-[358px] w-[24px] h-[24px]" viewBox="0 0 24 24"><path d="M0 0h11.500v11.500H0zM12.500 0H24v11.500H12.500zM0 12.500h11.500V24H0zM12.500 12.500H24V24H12.500z" fill="url(#gWin)"/></svg>
    <div class="flex items-center ml-[15px] w-[102px] h-[33px] rounded-full bg-[#fbf7ef]">
      <svg class="ml-[21px] w-[16px] h-[16px]" viewBox="0 0 16 16"><circle cx="6.500" cy="6.500" r="5" fill="none" stroke="#222" stroke-width="1.300"/><path d="M10 10l5 5" stroke="#222" stroke-width="1.500"/></svg>
      <span class="ml-[5px] text-[12px] text-[#333]">Search</span>
    </div>
    <div class="flex h-full ml-[3px]">
      <div class="flex flex-col items-center justify-center w-[46px]">
        <svg class="w-[26px] h-[28px]" viewBox="0 0 26 28"><path d="M13 1a12 12 0 0 1 0 24H6c-2 0-2 3-3 2-1-3-2-8-2-14A12 12 0 0 1 13 1z" fill="#7b6bd0"/><path d="M7 9h8a1.500 1.500 0 0 1 1.500 1.500v5A1.500 1.500 0 0 1 15 17H7zM17.500 11.500l3-2v7.500l-3-2z" fill="#fff"/></svg>
      </div>
      <div class="flex flex-col items-center justify-center relative w-[46px]">
        <svg class="w-[25px] h-[26px]" viewBox="0 0 25 26"><path d="M0 1h10l3 3h12v22H0z" fill="#f5c842"/><path d="M0 5h25v21H0z" fill="#fcd95e"/><rect x="6" y="17" width="14" height="5" rx="1" fill="#1e88d2"/></svg>
        <span class="absolute bottom-[3px] w-[6px] h-[3px] rounded-full bg-[#888]"></span>
      </div>
      <div class="flex flex-col items-center justify-center w-[46px]">
        <svg class="w-[24px] h-[24px]" viewBox="0 0 24 24"><circle cx="12" cy="12" r="12" fill="#2a9fd6"/><path d="M5 12l13-5-2 11-4-3-2 2-.5-3.500 6-5.500-7.500 5z" fill="#fff"/></svg>
      </div>
      <div class="flex flex-col items-center justify-center relative w-[46px]">
        <svg class="ml-[6px] w-[28px] h-[30px]" viewBox="0 0 28 30"><path d="M12 7a11 11 0 0 1 9.500 5.500H12a5 5 0 0 0-4.500 2.800L3 8a11 11 0 0 1 9-1z" fill="#e33b2e"/><path d="M2.500 8.500l5 8.500a5 5 0 0 0 5.500 2.800L9.700 28A11 11 0 0 1 2.500 8.500z" fill="#2fa94e"/><path d="M22 13.500a11 11 0 0 1-11 14.500l5-8.500a5 5 0 0 0 0-6z" fill="#f9c01e"/><circle cx="12" cy="18" r="4.200" fill="#3b78e7"/><circle cx="21" cy="6" r="6" fill="#6b5a52"/><circle cx="21" cy="7" r="2.500" fill="#d8cbc0"/></svg>
        <span class="absolute bottom-[3px] w-[6px] h-[3px] rounded-full bg-[#888]"></span>
      </div>
      <div class="flex flex-col items-center justify-center w-[46px]">
        <svg class="w-[24px] h-[24px]" viewBox="0 0 24 24"><circle cx="12" cy="12" r="12" fill="#1ed760"/><path d="M5 8.500c5-1.500 10-1 14.500 1.500M6 12.500c4-1 9-.7 12 1.300M7 16c3-.8 7-.6 10 1" fill="none" stroke="#111" stroke-width="2" stroke-linecap="round"/></svg>
      </div>
      <div class="flex flex-col items-center justify-center relative w-[46px]">
        <svg class="w-[24px] h-[26px] mt-[2px]" viewBox="0 0 24 26"><path d="M12 2a11 11 0 1 1-5 20.800L1 25l2-5.500A11 11 0 0 1 12 2z" fill="#25d366" stroke="#fff" stroke-width="1"/><path d="M8 7c-2 2-1 6 2 9s6 4 8 2l-.5-2.500-3-1-1 1c-2-1-3-2-4-4l1-1-1-3z" fill="#fff"/></svg>
        <span class="absolute top-[6px] right-[7px] flex items-center justify-center w-[15px] h-[15px] rounded-full bg-[#0f78c9] text-[10px] font-bold text-white">4</span>
      </div>
      <div class="flex flex-col items-center justify-center relative w-[46px]">
        <svg class="w-[28px] h-[28px]" viewBox="0 0 28 28"><circle cx="19" cy="7" r="4" fill="#7b83eb"/><path d="M12 10h13v10a6 6 0 0 1-13 0z" fill="#7b83eb"/><circle cx="13" cy="5" r="4.500" fill="#5059c9"/><path d="M1 8h14v14H1z" fill="#4b53bc"/><path d="M4 11h8M8 11v8" stroke="#fff" stroke-width="2"/><circle cx="22.500" cy="5" r="5" fill="#c9c9c0"/><circle cx="22.500" cy="5" r="3.500" fill="#4caf50"/><path d="M20.500 5l1.500 1.500 2.500-3" fill="none" stroke="#fff"/></svg>
        <span class="absolute bottom-[3px] w-[6px] h-[3px] rounded-full bg-[#888]"></span>
      </div>
      <div class="flex flex-col items-center justify-center w-[46px]">
        <svg class="w-[26px] h-[26px]" viewBox="0 0 26 26"><path d="M8 1h17v22H8z" fill="#28a8ea"/><path d="M16 1h9v10h-9z" fill="#50d9ff"/><path d="M8 1h8v10H8z" fill="#0f78d4"/><path d="M8 11h17v12H8z" fill="#1490df"/><rect y="7" width="14" height="14" rx="1" fill="#0f6cbd"/><circle cx="7" cy="14" r="3.500" fill="none" stroke="#fff" stroke-width="1.800"/></svg>
      </div>
      <div class="relative flex flex-col items-center justify-center w-[46px]">
        <div class="flex flex-col items-center justify-center w-[39px] h-[40px] rounded-[4px] bg-[#fbf5ec] shadow-sm">
          <svg class="w-[22px] h-[26px]" viewBox="0 0 22 26"><rect width="22" height="26" rx="2" fill="#f26a1b"/><rect y="19" width="22" height="7" fill="#8c3a12"/><text x="11" y="15" text-anchor="middle" font-size="14" font-weight="700" fill="#fff" font-family="Liberation Sans">F</text><text x="11" y="24.500" text-anchor="middle" font-size="5" font-weight="700" fill="#f3d9c6" font-family="Liberation Sans">360</text></svg>
          <span class="mt-[3px] -mb-[4px] w-[16px] h-[3px] rounded-full bg-[#0f78c9]"></span>
        </div>
      </div>
      <div class="flex flex-col items-center justify-center relative w-[46px]">
        <span class="text-[#5d6975]"><svg class="w-[25px] h-[25px]"><use href="#gear"/></svg></span>
        <svg class="absolute w-[12px] h-[12px]" viewBox="0 0 12 12"><circle cx="6" cy="6" r="6" fill="#1a5fa8"/></svg>
        <span class="absolute bottom-[3px] w-[6px] h-[3px] rounded-full bg-[#888]"></span>
      </div>
      <div class="relative flex flex-col items-center justify-center w-[46px]">
        <div class="flex items-center justify-center w-[41px] h-[40px] rounded-[4px] bg-[#fde3e3]">
          <svg class="w-[26px] h-[26px]" viewBox="0 0 26 26"><rect x="1" y="1" width="13" height="12" fill="#e4eaf0" stroke="#d52b2b" stroke-dasharray="2 1.500"/><path d="M10 12l4 4M14 16h8M14 16v7" stroke="#2a9fe6" stroke-width="1.500" fill="none"/><circle cx="23" cy="16" r="2" fill="none" stroke="#2a9fe6" stroke-width="1.300"/><circle cx="14" cy="24" r="2" fill="none" stroke="#2a9fe6" stroke-width="1.300"/></svg>
        </div>
        <span class="absolute bottom-[3px] w-[7px] h-[3px] rounded-full bg-[#d21c1c]"></span>
      </div>
    </div>
    <div class="flex items-center ml-auto text-[12px] text-[#222]">
      <svg class="w-[14px] h-[8px]" viewBox="0 0 14 8"><path d="M1 7l6-6 6 6" fill="none" stroke="#333" stroke-width="1.100"/></svg>
      <span class="ml-[19px] w-[25px]">ENG</span>
      <svg class="ml-[17px] w-[17px] h-[14px]" viewBox="0 0 17 14"><path d="M1 5c4-4 11-4 15 0M3.500 7.500c3-2.500 7-2.500 10 0M6 10c1.500-1 3.500-1 5 0" fill="none" stroke="#222" stroke-width="1.100"/><circle cx="8.500" cy="12.500" r="1.200" fill="#222"/></svg>
      <svg class="ml-[9px] w-[17px] h-[14px]" viewBox="0 0 17 14"><path d="M1 4.500h2.500L7.500 1v12L3.500 9.500H1z" fill="none" stroke="#333"/><path d="M11 5l4 4M15 5l-4 4" stroke="#333"/></svg>
      <svg class="ml-[9px] w-[17px] h-[11px]" viewBox="0 0 17 11"><rect x=".5" y=".5" width="14" height="10" rx="2" fill="none" stroke="#333"/><rect x="2" y="2" width="6" height="7" fill="#222"/><path d="M15 3.500h2v4h-2z" fill="#333"/></svg>
      <div class="ml-[11px] mr-[20px] w-[58px] text-right text-[11.7px] leading-[17px] text-[#333]">
        <div>3:38 pm</div>
        <div>26/1/2023</div>
      </div>
    </div>
  </div>
</div>
</body>
</html>
